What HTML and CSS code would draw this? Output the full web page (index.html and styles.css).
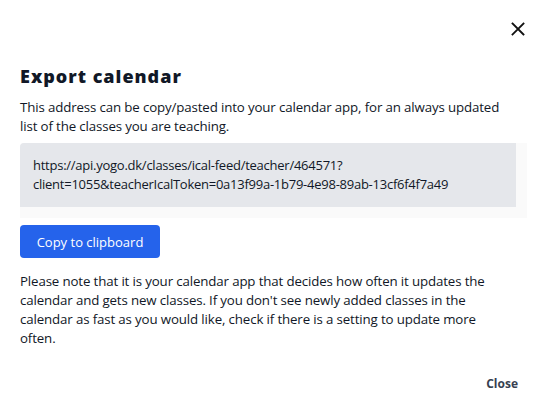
FILE: index.html
```html
<!DOCTYPE html>
<html lang="en">
<head>
<meta charset="utf-8">
<title>Export calendar</title>
<link rel="stylesheet" href="styles.css">
</head>
<body>
<div class="modal">
  <div class="top">
    <button class="x" aria-label="Close">
      <svg width="14" height="14" viewBox="0 0 14 14"><path d="M1.5 1.5 L12.5 12.5 M12.5 1.5 L1.5 12.5" stroke="#111" stroke-width="1.8" stroke-linecap="square" fill="none"/></svg>
    </button>
  </div>
  <h1 class="title">Export calendar</h1>
  <p class="text">This address can be copy/pasted into your calendar app, for an always updated list of the classes you are teaching.</p>
  <div class="scrollbox">
    <div class="url">https://api.yogo.dk/classes/ical-feed/teacher/464571?<br>client=1055&amp;teacherIcalToken=0a13f99a-1b79-4e98-89ab-13cf6f4f7a49</div>
  </div>
  <button class="copy">Copy to clipboard</button>
  <p class="text note">Please note that it is your calendar app that decides how often it updates the calendar and gets new classes. If you don't see newly added classes in the calendar as fast as you would like, check if there is a setting to update more often.</p>
  <div class="footer"><button class="close">Close</button></div>
</div>
</body>
</html>
```
FILE: styles.css
```css
* { box-sizing: border-box; }
html, body { margin: 0; padding: 0; background: #fff; }
body { font-family: "Open Sans", "Noto Sans", sans-serif; color: #111827; }
.modal { width: 548px; padding: 0 20px; display: flex; flex-direction: column; }
.top { display: flex; justify-content: flex-end; padding-top: 22px; padding-right: 3px; height: 58px; }
.x { border: 0; background: none; padding: 0; width: 14px; height: 14px; display: block; cursor: pointer; }
.x svg { display: block; }
.title { margin: 0; font-size: 18px; font-weight: 800; color: #111827; line-height: 36px; letter-spacing: 1px; }
.text { margin: 4px 0 0; max-width: 492px; font-size: 13.3px; line-height: 19px; color: #111827; letter-spacing: -0.14px; }
.scrollbox { margin-top: 7px; width: 507px; height: 75px; background: #fafafa; border-radius: 4px 0 0 0; padding: 0 11px 11px 0; }
.url { background: #e5e7eb; height: 64px; border-radius: 4px 0 0 0; padding: 13px 13px; font-size: 13px; line-height: 19px; letter-spacing: -0.25px; color: #111827; }
.copy { margin-top: 7px; align-self: flex-start; width: 140px; height: 33px; border: 0; border-radius: 4px; background: #2563eb; color: #fff; font-family: inherit; font-size: 13px; font-weight: 500; padding: 0; }
.note { margin-top: 14px; }
.footer { display: flex; justify-content: flex-end; padding-top: 27px; padding-right: 10px; }
.close { border: 0; background: none; padding: 0; font-family: inherit; font-size: 12px; font-weight: 700; color: #374151; }
```
